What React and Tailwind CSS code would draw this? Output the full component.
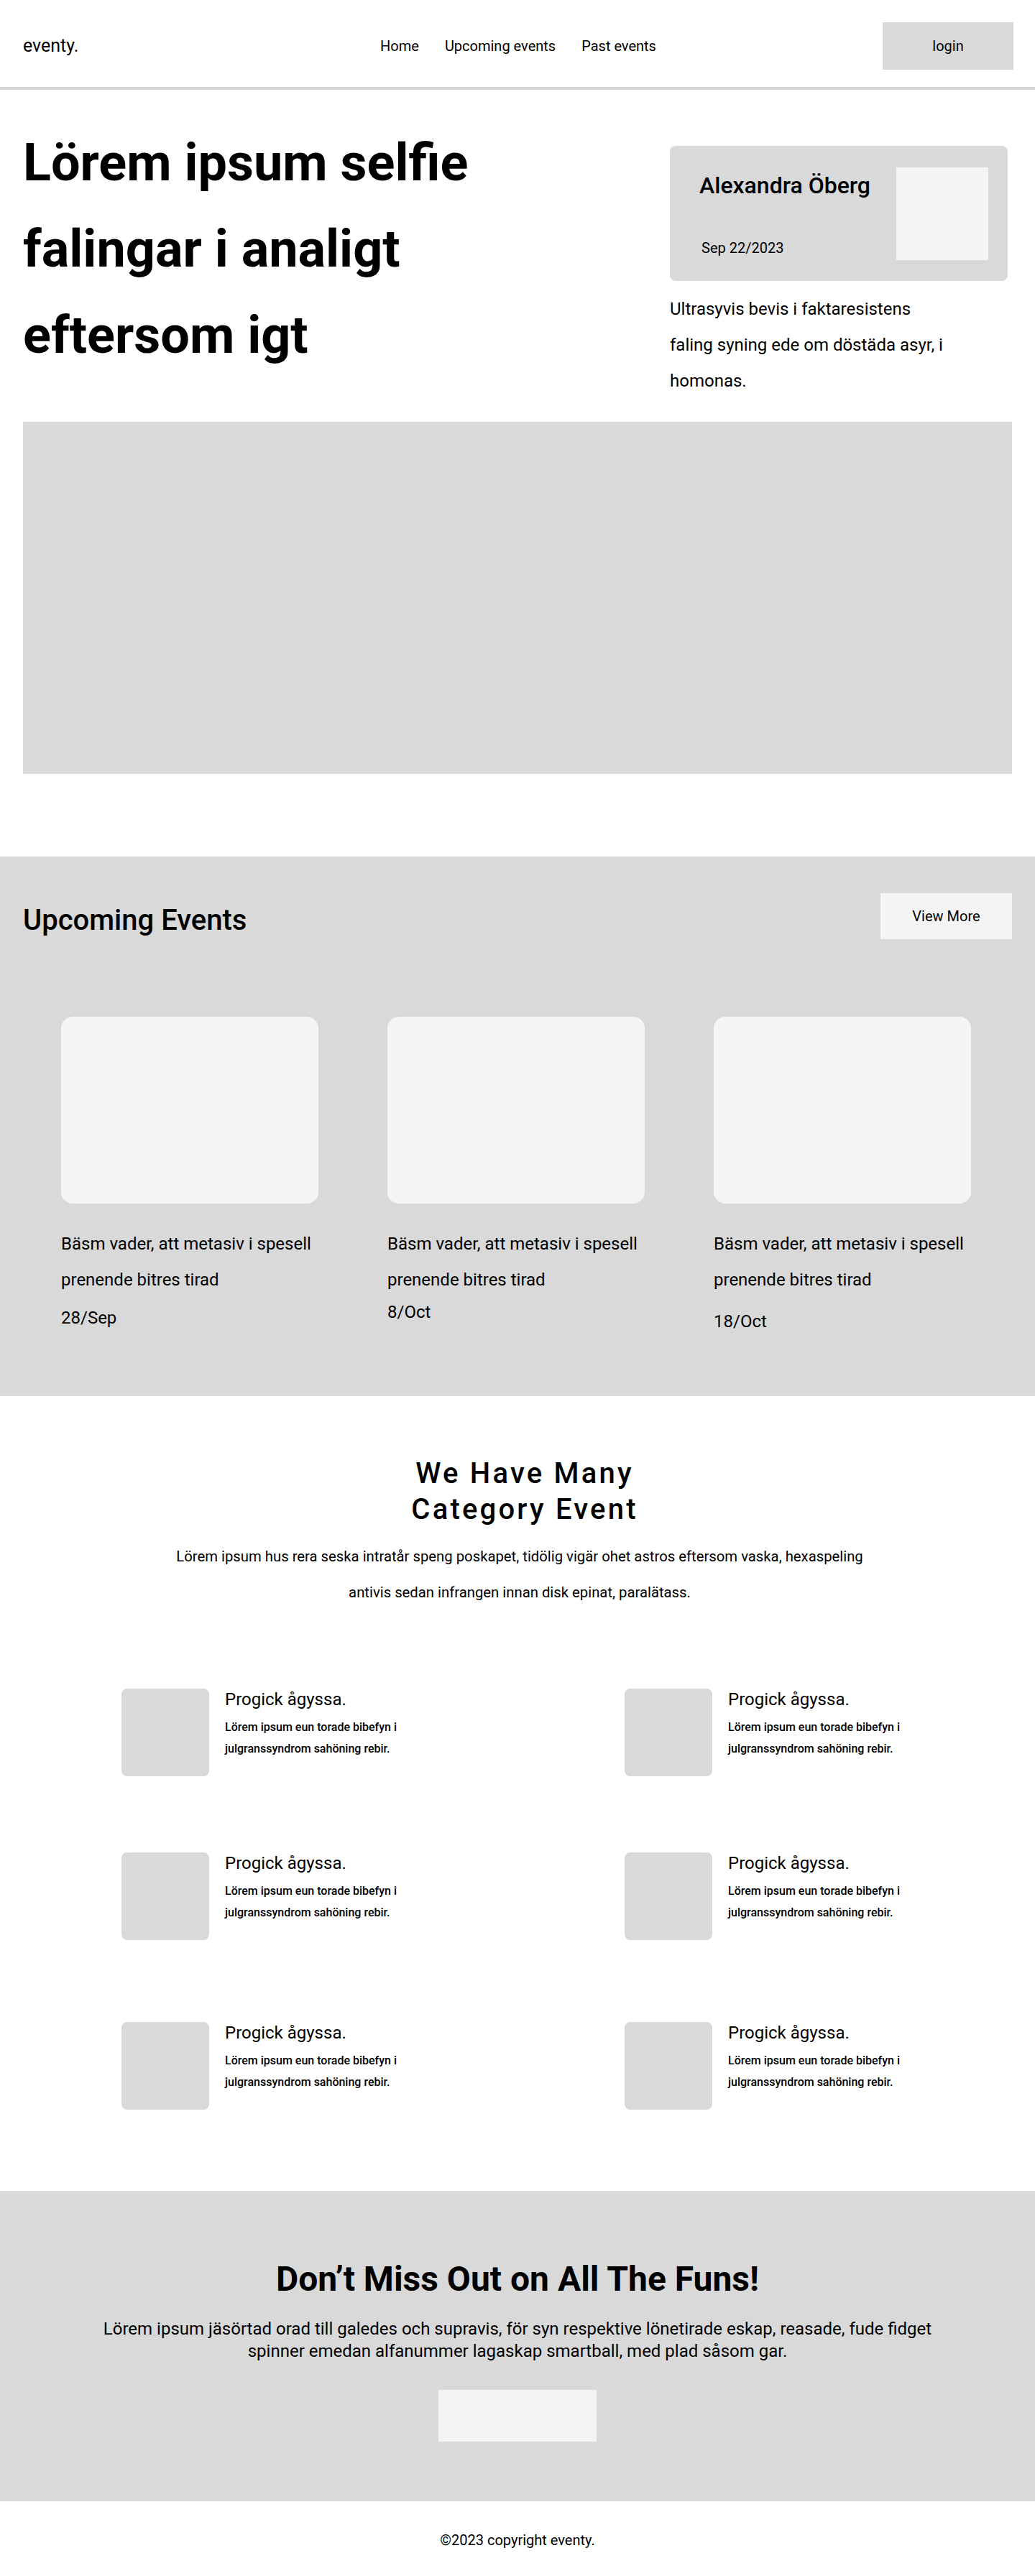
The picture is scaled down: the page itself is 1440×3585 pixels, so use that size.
import React from "react";

const events = [
    { date: "28/Sep", gap: "mt-[14px]" },
    { date: "8/Oct", gap: "mt-[6px]" },
    { date: "18/Oct", gap: "mt-[19px]" },
];

const rowGaps = ["", "mt-[106px]", "mt-[114px]"];

function Header() {
    return (
        <header className="h-[125px] border-b-4 border-[#d6d6d6] pt-[7px] pl-8 pr-[30px] flex items-center">
            <div className="flex-1 text-[25px]">eventy.</div>
            <nav className="flex items-center gap-9 text-[20px]">
                <a>Home</a>
                <a>Upcoming events</a>
                <a>Past events</a>
            </nav>
            <div className="flex-1 flex justify-end">
                <button className="w-[182px] h-[66px] bg-[#d9d9d9] text-[20px]">login</button>
            </div>
        </header>
    );
}

function Hero() {
    return (
        <section className="px-8 pt-[42px] pb-[115px]">
            <div className="flex justify-between">
                <h1 className="text-[72px] font-bold leading-[120px]">
                    Lörem ipsum selfie
                    <br />
                    falingar i analigt
                    <br />
                    eftersom igt
                </h1>
                <div className="w-[470px] mr-[6px] mt-[36px]">
                    <div className="h-[188px] rounded-lg bg-[#d9d9d9] flex justify-between">
                        <div className="flex flex-col justify-between pt-[36px] pb-[34px] pl-[41px]">
                            <div className="text-[32px] font-medium leading-[38px]">Alexandra Öberg</div>
                            <div className="text-[20px] leading-[23px] pl-[3px]">Sep 22/2023</div>
                        </div>
                        <div className="w-[128px] h-[129px] bg-[#f4f4f4] mt-[30px] mr-[27px]" />
                    </div>
                    <p className="mt-[14px] w-[395px] text-[24px] leading-[50px]">
                        Ultrasyvis bevis i faktaresistens faling syning ede om döstäda asyr, i homonas.
                    </p>
                </div>
            </div>
            <div className="mt-[32px] h-[490px] bg-[#d9d9d9]" />
        </section>
    );
}

function Upcoming() {
    return (
        <section className="bg-[#d9d9d9] px-8 pt-[51px] pb-[90px]">
            <div className="flex justify-between items-start">
                <h2 className="mt-[14px] text-[40px] font-medium leading-[48px]">Upcoming Events</h2>
                <button className="w-[183px] h-[64px] bg-[#f4f4f4] text-[20px]">View More</button>
            </div>
            <div className="mt-[108px] ml-[53px] w-[1266px] grid grid-cols-3 gap-x-[96px] items-start">
                {events.map((e) => (
                    <div key={e.date}>
                        <div className="h-[260px] rounded-2xl bg-[#f5f5f5]" />
                        <h3 className="mt-[31px] text-[24px] leading-[50px]">
                            Bäsm vader, att metasiv i spesell prenende bitres tirad
                        </h3>
                        <div className={`${e.gap} text-[24px] leading-[28px]`}>{e.date}</div>
                    </div>
                ))}
            </div>
        </section>
    );
}

function Item() {
    return (
        <div className="flex items-start gap-[22px]">
            <div className="w-[122px] h-[122px] rounded-lg bg-[#d9d9d9] shrink-0" />
            <div className="pt-[1px]">
                <div className="text-[24px] leading-[28px]">Progick ågyssa.</div>
                <p className="mt-[10px] max-w-[250px] text-[16px] font-medium leading-[30px]">
                    Lörem ipsum eun torade bibefyn i julgranssyndrom sahöning rebir.
                </p>
            </div>
        </div>
    );
}

function Categories() {
    return (
        <section className="pt-[83px] pb-[113px]">
            <h2 className="pl-[20px] text-center text-[40px] font-medium tracking-[0.08em] leading-[50px]">
                We Have Many
                <br />
                Category Event
            </h2>
            <p className="mt-[15px] pl-[6px] text-center text-[20.3px] leading-[50px]">
                Lörem ipsum hus rera seska intratår speng poskapet, tidölig vigär ohet astros eftersom vaska, hexaspeling
                <br />
                antivis sedan infrangen innan disk epinat, paralätass.
            </p>
            <div className="mt-[109px] pl-[169px]">
                {rowGaps.map((g, i) => (
                    <div key={i} className={`${g} grid grid-cols-[700px_1fr]`}>
                        <Item />
                        <Item />
                    </div>
                ))}
            </div>
        </section>
    );
}

function Cta() {
    return (
        <section className="bg-[#d9d9d9] pt-[95px] pb-[83px] flex flex-col items-center text-center">
            <h2 className="text-[48px] font-bold leading-[56px]">Don’t Miss Out on All The Funs!</h2>
            <p className="mt-[26px] max-w-[1180px] text-[24px] leading-[31px]">
                Lörem ipsum jäsörtad orad till galedes och supravis, för syn respektive lönetirade eskap, reasade, fude fidget spinner emedan alfanummer lagaskap smartball, med plad såsom gar.
            </p>
            <button className="mt-[38px] w-[220px] h-[72px] bg-[#f4f4f4]" />
        </section>
    );
}

export default function App() {
    return (
        <div className="bg-white text-black font-['Roboto',sans-serif]">
            <Header />
            <Hero />
            <Upcoming />
            <Categories />
            <Cta />
            <footer className="h-[104px] pt-[43px] text-center text-[20px] leading-[23px]">©2023 copyright eventy.</footer>
        </div>
    );
}
